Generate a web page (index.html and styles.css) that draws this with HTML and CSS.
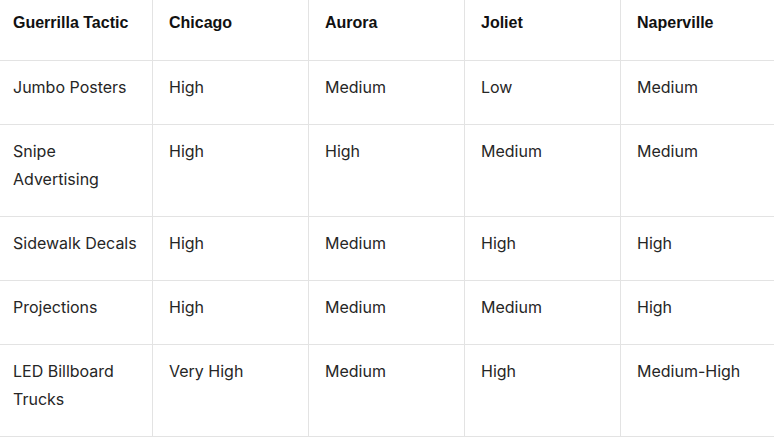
FILE: index.html
```html
<!DOCTYPE html>
<html lang="en">
<head>
<meta charset="utf-8">
<title>Guerrilla Tactics</title>
<link rel="stylesheet" href="styles.css">
</head>
<body>
<table class="tactics">
  <colgroup>
    <col class="c-first">
    <col class="c-mid">
    <col class="c-mid">
    <col class="c-mid">
    <col class="c-last">
  </colgroup>
  <thead>
    <tr>
      <th>Guerrilla Tactic</th>
      <th>Chicago</th>
      <th>Aurora</th>
      <th>Joliet</th>
      <th>Naperville</th>
    </tr>
  </thead>
  <tbody>
    <tr>
      <td>Jumbo Posters</td>
      <td>High</td>
      <td>Medium</td>
      <td>Low</td>
      <td>Medium</td>
    </tr>
    <tr>
      <td>Snipe Advertising</td>
      <td>High</td>
      <td>High</td>
      <td>Medium</td>
      <td>Medium</td>
    </tr>
    <tr>
      <td>Sidewalk Decals</td>
      <td>High</td>
      <td>Medium</td>
      <td>High</td>
      <td>High</td>
    </tr>
    <tr>
      <td>Projections</td>
      <td>High</td>
      <td>Medium</td>
      <td>Medium</td>
      <td>High</td>
    </tr>
    <tr>
      <td>LED Billboard Trucks</td>
      <td>Very High</td>
      <td>Medium</td>
      <td>High</td>
      <td>Medium-High</td>
    </tr>
  </tbody>
</table>
</body>
</html>
```

FILE: styles.css
```css
html, body {
  margin: 0;
  padding: 0;
  background: #ffffff;
}

.tactics {
  width: 774px;
  table-layout: fixed;
  border-collapse: separate;
  border-spacing: 0;
  font-family: "Inter", "Liberation Sans", sans-serif;
  font-size: 16px;
  line-height: 28px;
  color: #262626;
}

.c-first { width: 152px; }
.c-mid { width: 156px; }
.c-last { width: 154px; }

.tactics th,
.tactics td {
  text-align: left;
  vertical-align: top;
  border-bottom: 1px solid #e3e3e3;
  padding: 12px 12px 23px 16px;
}

.tactics th + th,
.tactics td + td {
  border-left: 1px solid #e3e3e3;
}

.tactics th:first-child,
.tactics td:first-child {
  padding-left: 13px;
}

.tactics th {
  font-family: "Liberation Sans", Arial, sans-serif;
  font-weight: 700;
  color: #111111;
  padding-top: 9px;
  padding-bottom: 23px;
}
```
